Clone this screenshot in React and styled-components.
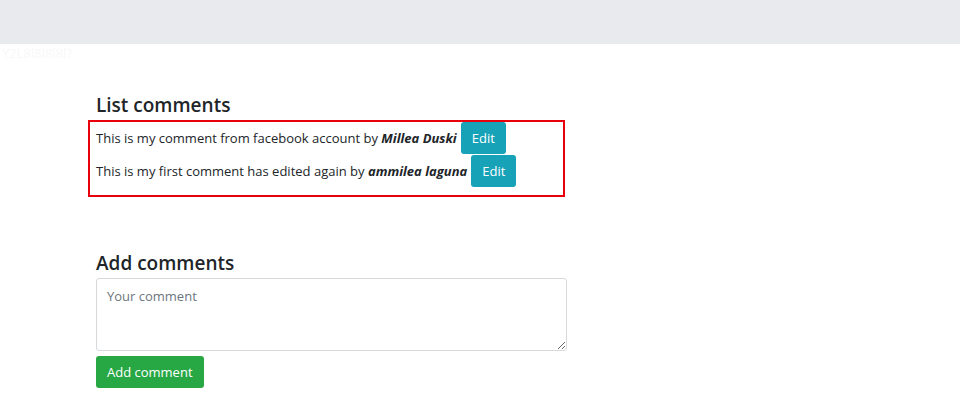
import React from "react";
import styled, { createGlobalStyle } from "styled-components";

const comments = [
  { text: "This is my comment from facebook account by", author: "Millea Duski" },
  { text: "This is my first comment has edited again by", author: "ammilea laguna" },
];

const GlobalStyle = createGlobalStyle`
  body {
    margin: 0;
    background: #fff;
    font-family: "Open Sans", "Noto Sans", sans-serif;
    color: #212529;
  }
`;

const App = () => {
  return (
    <>
      <GlobalStyle />
      <TopBar />
      <Ghost>Y2L8l8l8l8l?</Ghost>
      <Container>
        <Heading>List comments</Heading>
        <CommentBox>
          {comments.map((item, index) => (
            <CommentRow key={`comment${index}`}>
              <span>
                {item.text} <Author>{item.author}</Author>
              </span>
              <Button $bg="#17a2b8">Edit</Button>
            </CommentRow>
          ))}
        </CommentBox>

        <Heading $top="55px">Add comments</Heading>
        <TextArea placeholder="Your comment" />
        <Button $bg="#28a745">Add comment</Button>
      </Container>
    </>
  );
};

const TopBar = styled.div`
  height: 44px;
  background: #e9eaed;
`;

const Ghost = styled.div`
  height: 18px;
  font-size: 13px;
  line-height: 18px;
  color: #f8f8f8;
  padding-left: 2px;
`;

const Container = styled.div`
  width: 472px;
  margin-left: 96px;
  padding-top: 32px;
  display: flex;
  flex-direction: column;
  align-items: flex-start;
`;

const Heading = styled.h4`
  margin: ${(p) => p.$top || "0"} 0 4px;
  font-size: 19px;
  font-weight: 600;
  line-height: 22px;
  color: #212529;
`;

const CommentBox = styled.div`
  margin-left: -8px;
  width: 477px;
  box-sizing: border-box;
  border: 2px solid #e8000d;
  padding: 0 0 8px 6px;
  display: flex;
  flex-direction: column;
  gap: 1px;
`;

const CommentRow = styled.div`
  display: flex;
  align-items: center;
  gap: 4px;
  font-size: 13px;
  color: #212529;
`;

const Author = styled.b`
  font-style: italic;
  font-weight: 700;
`;

const Button = styled.button`
  background: ${(p) => p.$bg};
  color: #fff;
  border: none;
  border-radius: 3px;
  height: 32px;
  padding: 0 11px;
  font-family: inherit;
  font-size: 13px;
  cursor: pointer;
`;

const TextArea = styled.textarea`
  width: 471px;
  height: 73px;
  box-sizing: border-box;
  border: 1px solid #d6d9dc;
  border-radius: 3px;
  padding: 8px 10px;
  margin-bottom: 5px;
  font-family: inherit;
  font-size: 13px;
  resize: vertical;

  &::placeholder {
    color: #6c757d;
  }
`;

export default App;
